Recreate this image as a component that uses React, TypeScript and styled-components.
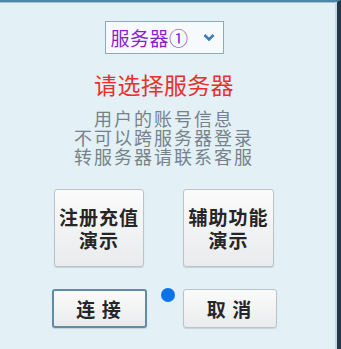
import styled, { createGlobalStyle } from "styled-components";

const GlobalStyle = createGlobalStyle`
	html, body {
		margin: 0;
		padding: 0;
		background: #e3f0f6;
	}
	body {
		font-family: "Noto Sans CJK SC", "Noto Sans", sans-serif;
	}
`;

const Window = styled.div`
	width: 341px;
	height: 349px;
	box-sizing: border-box;
	background: #e3f0f6;
	border-top: 2px solid #4d86a6;
	border-right: 4px solid #25374a;
	box-shadow: inset -2px 0 0 #c4d8e2, inset 0 1px 0 #9cc4d8;
	padding: 19px 9px 0 0;
	display: flex;
	flex-direction: column;
	align-items: center;
`;

const Select = styled.div`
	width: 119px;
	height: 33px;
	box-sizing: border-box;
	border: 1px solid #8fa8c0;
	background: #f6fafd;
	display: flex;
	align-items: center;
	padding: 0 8px 0 5px;
	justify-content: space-between;
`;

const SelectText = styled.span`
	color: #8a1fd0;
	font-size: 19px;
	line-height: 1;
	letter-spacing: 0.5px;
`;

const Title = styled.div`
	margin-top: 16px;
	color: #e8302c;
	font-size: 23px;
	line-height: 28px;
	letter-spacing: 0.3px;
`;

const Notice = styled.div`
	margin-top: 11px;
	color: #76828a;
	font-size: 18px;
	line-height: 19px;
	text-align: center;
	letter-spacing: 2px;
`;

const Row = styled.div<{ $top: number }>`
	margin-top: ${(p) => p.$top}px;
	display: flex;
	align-items: flex-start;
`;

const Spacer = styled.div<{ $w: number }>`
	width: ${(p) => p.$w}px;
`;

const Button = styled.div<{ $w: number; $h: number; $focus?: boolean }>`
	width: ${(p) => p.$w}px;
	height: ${(p) => p.$h}px;
	box-sizing: border-box;
	border: ${(p) => (p.$focus ? "2px solid #5d8ea6" : "1px solid #b9c3c9")};
	border-radius: 3px;
	background: linear-gradient(#fbfbfb, #e9ebec);
	box-shadow: 0 1px 1px rgba(0, 0, 0, 0.12);
	display: flex;
	align-items: center;
	justify-content: center;
	text-align: center;
	color: #262626;
	font-size: 19px;
	font-weight: bold;
	line-height: 23px;
	letter-spacing: 1px;
`;

const Dot = styled.div`
	width: 14px;
	height: 14px;
	border-radius: 50%;
	background: #0b72e8;
	margin: -1px 8px 0 14px;
`;

export default function App() {
	return (
		<>
			<GlobalStyle />
			<Window>
				<Select>
					<SelectText>服务器①</SelectText>
					<svg width="12" height="9" viewBox="0 0 12 9">
						<polyline points="1.5,2 6,6.5 10.5,2" fill="none" stroke="#3b7bb8" strokeWidth="2.6" />
					</svg>
				</Select>
				<Title>请选择服务器</Title>
				<Notice>
					用户的账号信息<br />
					不可以跨服务器登录<br />
					转服务器请联系客服
				</Notice>
				<Row $top={23}>
					<Button $w={90} $h={78}>注册充值<br />演示</Button>
					<Spacer $w={39} />
					<Button $w={91} $h={78}>辅助功能<br />演示</Button>
				</Row>
				<Row $top={22}>
					<Button $w={95} $h={39} $focus>连&nbsp;接</Button>
					<Dot />
					<Button $w={94} $h={39}>取&nbsp;消</Button>
				</Row>
			</Window>
		</>
	);
}
